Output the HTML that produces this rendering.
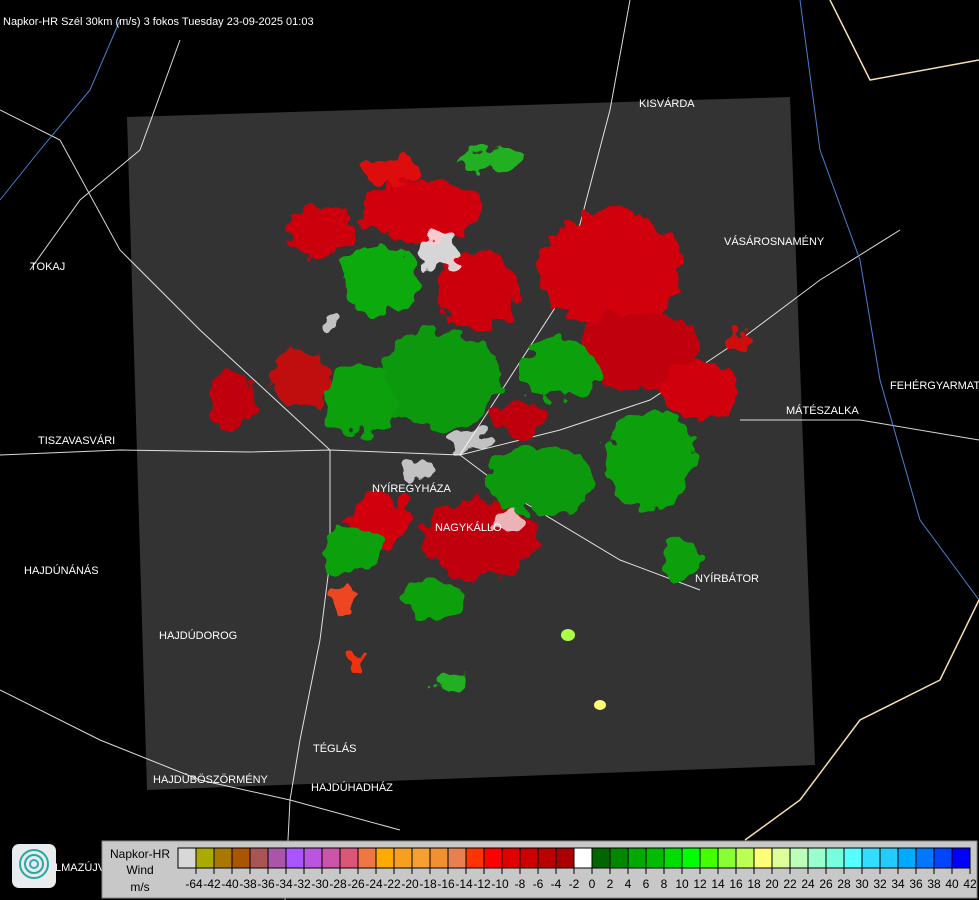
<!DOCTYPE html>
<html><head><meta charset="utf-8"><style>
html,body{margin:0;padding:0;background:#000;width:979px;height:900px;overflow:hidden;font-family:"Liberation Sans",sans-serif}
svg{position:absolute;left:0;top:0}
.t{fill:#fff;font-size:11px;font-family:"Liberation Sans",sans-serif}
.l{font-size:12px;font-family:"Liberation Sans",sans-serif;text-anchor:middle}
</style></head><body>
<svg width="979" height="900" viewBox="0 0 979 900">
<defs>
<filter id="rag" x="-20%" y="-20%" width="140%" height="140%">
<feTurbulence type="fractalNoise" baseFrequency="0.06" numOctaves="2" seed="3" result="n"/>
<feDisplacementMap in="SourceGraphic" in2="n" scale="28" xChannelSelector="R" yChannelSelector="G"/>
</filter>
</defs>
<rect width="979" height="900" fill="#000"/>
<polygon points="127,117 790,97 815,765 147,790" fill="#333"/>
<g fill="none" stroke="#fff" stroke-width="1" opacity="0.85">
<path d="M0,455 L120,450 L250,452 L330,450 L460,455 L560,430 L650,400 L740,340 L820,280 L900,230"/>
<path d="M330,450 L330,560 L320,640 L300,740 L290,800 L285,900"/>
<path d="M460,455 L520,500 L620,560 L700,590"/>
<path d="M460,455 L560,300 L610,110 L630,0"/>
<path d="M0,110 L60,140 L120,250 L200,330 L330,450"/>
<path d="M740,420 L860,420 L979,440"/>
<path d="M0,690 L100,740 L200,780 L290,800 L400,830"/>
<path d="M30,270 L80,200 L140,150 L180,40"/>
</g>
<g fill="none" stroke="#4a7fd0" stroke-width="1">
<path d="M0,200 L40,150 L90,90 L120,20"/>
<path d="M800,0 L820,150 L860,260 L880,380 L920,520 L979,600"/>
</g>
<path d="M830,0 L870,80 L979,60" fill="none" stroke="#f5deb0" stroke-width="1.5"/>
<path d="M979,600 L940,680 L860,720 L800,800 L745,840" fill="none" stroke="#f5deb0" stroke-width="1.5"/>
<g filter="url(#rag)">
<ellipse cx="610" cy="270" rx="70" ry="60" fill="#d00010"/>
<ellipse cx="640" cy="350" rx="60" ry="40" fill="#c00010"/>
<ellipse cx="700" cy="390" rx="40" ry="30" fill="#d00010"/>
<ellipse cx="420" cy="210" rx="60" ry="30" fill="#d00010"/>
<ellipse cx="320" cy="230" rx="35" ry="25" fill="#cc0010"/>
<ellipse cx="390" cy="170" rx="30" ry="15" fill="#dd1010"/>
<ellipse cx="230" cy="400" rx="25" ry="30" fill="#c00010"/>
<ellipse cx="300" cy="380" rx="30" ry="30" fill="#c01010"/>
<ellipse cx="480" cy="540" rx="60" ry="40" fill="#c00010"/>
<ellipse cx="380" cy="520" rx="30" ry="30" fill="#d00010"/>
<ellipse cx="520" cy="420" rx="25" ry="20" fill="#c00010"/>
<ellipse cx="480" cy="290" rx="40" ry="40" fill="#cc0010"/>
<ellipse cx="440" cy="380" rx="60" ry="50" fill="#119911"/>
<ellipse cx="380" cy="280" rx="40" ry="35" fill="#10aa10"/>
<ellipse cx="360" cy="400" rx="35" ry="35" fill="#11a011"/>
<ellipse cx="540" cy="480" rx="55" ry="35" fill="#119911"/>
<ellipse cx="650" cy="460" rx="45" ry="50" fill="#10a010"/>
<ellipse cx="560" cy="370" rx="40" ry="30" fill="#10a010"/>
<ellipse cx="490" cy="160" rx="30" ry="12" fill="#20b020"/>
<ellipse cx="350" cy="550" rx="30" ry="25" fill="#10a010"/>
<ellipse cx="430" cy="600" rx="30" ry="20" fill="#10a010"/>
<ellipse cx="680" cy="560" rx="20" ry="20" fill="#10a010"/>
<ellipse cx="440" cy="250" rx="20" ry="20" fill="#fff" opacity="0.8"/>
<ellipse cx="470" cy="440" rx="25" ry="10" fill="#fff" opacity="0.7"/>
<ellipse cx="420" cy="470" rx="15" ry="10" fill="#fff" opacity="0.7"/>
<ellipse cx="510" cy="520" rx="15" ry="10" fill="#fff" opacity="0.7"/>
<ellipse cx="330" cy="320" rx="10" ry="8" fill="#fff" opacity="0.7"/>
<ellipse cx="345" cy="600" rx="12" ry="15" fill="#ee4422"/>
<ellipse cx="355" cy="658" rx="8" ry="8" fill="#ee3311"/>
<ellipse cx="450" cy="680" rx="15" ry="8" fill="#20b020"/>
<ellipse cx="740" cy="340" rx="10" ry="10" fill="#d01010"/>
</g>
<ellipse cx="600" cy="705" rx="6" ry="5" fill="#ffff77"/>
<ellipse cx="568" cy="635" rx="7" ry="6" fill="#aaff44"/>
<text class="t" x="3" y="25">Napkor-HR Szél 30km (m/s) 3 fokos Tuesday 23-09-2025 01:03</text>
<text class="t" x="639" y="107">KISVÁRDA</text>
<text class="t" x="724" y="245">VÁSÁROSNAMÉNY</text>
<text class="t" x="30" y="270">TOKAJ</text>
<text class="t" x="890" y="389">FEHÉRGYARMAT</text>
<text class="t" x="786" y="414">MÁTÉSZALKA</text>
<text class="t" x="38" y="444">TISZAVASVÁRI</text>
<text class="t" x="372" y="492">NYÍREGYHÁZA</text>
<text class="t" x="435" y="531">NAGYKÁLLÓ</text>
<text class="t" x="24" y="574">HAJDÚNÁNÁS</text>
<text class="t" x="695" y="582">NYÍRBÁTOR</text>
<text class="t" x="159" y="639">HAJDÚDOROG</text>
<text class="t" x="313" y="752">TÉGLÁS</text>
<text class="t" x="153" y="783">HAJDÚBÖSZÖRMÉNY</text>
<text class="t" x="311" y="791">HAJDÚHADHÁZ</text>
<text class="t" x="55" y="871">LMAZÚJVÁROS</text>
<rect x="12" y="844" width="44" height="44" rx="7" fill="#e8ecef"/>
<g fill="none" stroke="#2aa8a0" stroke-width="2">
<circle cx="34" cy="864" r="14"/><circle cx="34" cy="864" r="9"/><circle cx="34" cy="864" r="4" stroke="#3ab"/>
</g>
<rect x="102" y="841" width="875" height="57" fill="#c8c8c8" stroke="#888"/>
<text x="140" y="858" class="l">Napkor-HR</text>
<text x="140" y="874" class="l">Wind</text>
<text x="140" y="891" class="l">m/s</text>
<g stroke="#000" stroke-width="1">
<rect x="178" y="848" width="18" height="20" fill="#d8d8d8"/>
<rect x="196" y="848" width="18" height="20" fill="#aaaa00"/>
<rect x="214" y="848" width="18" height="20" fill="#aa7700"/>
<rect x="232" y="848" width="18" height="20" fill="#aa5500"/>
<rect x="250" y="848" width="18" height="20" fill="#aa5555"/>
<rect x="268" y="848" width="18" height="20" fill="#aa55aa"/>
<rect x="286" y="848" width="18" height="20" fill="#aa55ff"/>
<rect x="304" y="848" width="18" height="20" fill="#bb55dd"/>
<rect x="322" y="848" width="18" height="20" fill="#cc55aa"/>
<rect x="340" y="848" width="18" height="20" fill="#dd5577"/>
<rect x="358" y="848" width="18" height="20" fill="#ee7744"/>
<rect x="376" y="848" width="18" height="20" fill="#ffaa00"/>
<rect x="394" y="848" width="18" height="20" fill="#f7a020"/>
<rect x="412" y="848" width="18" height="20" fill="#f5a030"/>
<rect x="430" y="848" width="18" height="20" fill="#f09030"/>
<rect x="448" y="848" width="18" height="20" fill="#e88050"/>
<rect x="466" y="848" width="18" height="20" fill="#ff3300"/>
<rect x="484" y="848" width="18" height="20" fill="#ff0000"/>
<rect x="502" y="848" width="18" height="20" fill="#e00000"/>
<rect x="520" y="848" width="18" height="20" fill="#cc0000"/>
<rect x="538" y="848" width="18" height="20" fill="#bb0000"/>
<rect x="556" y="848" width="18" height="20" fill="#aa0000"/>
<rect x="574" y="848" width="18" height="20" fill="#ffffff"/>
<rect x="592" y="848" width="18" height="20" fill="#006600"/>
<rect x="610" y="848" width="18" height="20" fill="#008800"/>
<rect x="628" y="848" width="18" height="20" fill="#00aa00"/>
<rect x="646" y="848" width="18" height="20" fill="#00bb00"/>
<rect x="664" y="848" width="18" height="20" fill="#00dd00"/>
<rect x="682" y="848" width="18" height="20" fill="#00ff00"/>
<rect x="700" y="848" width="18" height="20" fill="#44ff00"/>
<rect x="718" y="848" width="18" height="20" fill="#88ff33"/>
<rect x="736" y="848" width="18" height="20" fill="#bbff55"/>
<rect x="754" y="848" width="18" height="20" fill="#ffff77"/>
<rect x="772" y="848" width="18" height="20" fill="#ddff99"/>
<rect x="790" y="848" width="18" height="20" fill="#bbffbb"/>
<rect x="808" y="848" width="18" height="20" fill="#99ffcc"/>
<rect x="826" y="848" width="18" height="20" fill="#77ffdd"/>
<rect x="844" y="848" width="18" height="20" fill="#55ffff"/>
<rect x="862" y="848" width="18" height="20" fill="#33ddff"/>
<rect x="880" y="848" width="18" height="20" fill="#22ccff"/>
<rect x="898" y="848" width="18" height="20" fill="#00aaff"/>
<rect x="916" y="848" width="18" height="20" fill="#0077ff"/>
<rect x="934" y="848" width="18" height="20" fill="#0044ff"/>
<rect x="952" y="848" width="18" height="20" fill="#0000ff"/>
<path d="M196,868v6M214,868v6M232,868v6M250,868v6M268,868v6M286,868v6M304,868v6M322,868v6M340,868v6M358,868v6M376,868v6M394,868v6M412,868v6M430,868v6M448,868v6M466,868v6M484,868v6M502,868v6M520,868v6M538,868v6M556,868v6M574,868v6M592,868v6M610,868v6M628,868v6M646,868v6M664,868v6M682,868v6M700,868v6M718,868v6M736,868v6M754,868v6M772,868v6M790,868v6M808,868v6M826,868v6M844,868v6M862,868v6M880,868v6M898,868v6M916,868v6M934,868v6M952,868v6M970,868v6"/>
</g>
<g class="l">
<text x="194" y="888" class="l">-64</text><text x="212" y="888" class="l">-42</text><text x="230" y="888" class="l">-40</text><text x="248" y="888" class="l">-38</text><text x="266" y="888" class="l">-36</text><text x="284" y="888" class="l">-34</text><text x="302" y="888" class="l">-32</text><text x="320" y="888" class="l">-30</text><text x="338" y="888" class="l">-28</text><text x="356" y="888" class="l">-26</text><text x="374" y="888" class="l">-24</text><text x="392" y="888" class="l">-22</text><text x="410" y="888" class="l">-20</text><text x="428" y="888" class="l">-18</text><text x="446" y="888" class="l">-16</text><text x="464" y="888" class="l">-14</text><text x="482" y="888" class="l">-12</text><text x="500" y="888" class="l">-10</text><text x="520" y="888" class="l">-8</text><text x="538" y="888" class="l">-6</text><text x="556" y="888" class="l">-4</text><text x="574" y="888" class="l">-2</text><text x="592" y="888" class="l">0</text><text x="610" y="888" class="l">2</text><text x="628" y="888" class="l">4</text><text x="646" y="888" class="l">6</text><text x="664" y="888" class="l">8</text><text x="682" y="888" class="l">10</text><text x="700" y="888" class="l">12</text><text x="718" y="888" class="l">14</text><text x="736" y="888" class="l">16</text><text x="754" y="888" class="l">18</text><text x="772" y="888" class="l">20</text><text x="790" y="888" class="l">22</text><text x="808" y="888" class="l">24</text><text x="826" y="888" class="l">26</text><text x="844" y="888" class="l">28</text><text x="862" y="888" class="l">30</text><text x="880" y="888" class="l">32</text><text x="898" y="888" class="l">34</text><text x="916" y="888" class="l">36</text><text x="934" y="888" class="l">38</text><text x="952" y="888" class="l">40</text><text x="970" y="888" class="l">42</text>
</g>
</svg>
</body></html>
